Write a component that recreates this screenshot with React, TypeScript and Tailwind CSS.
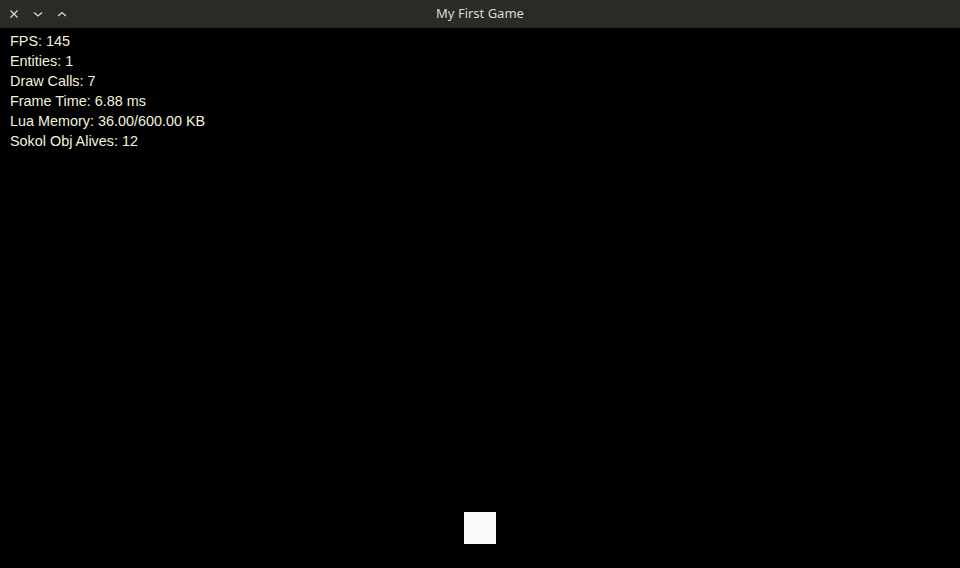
import React from "react";

export default function App() {
  const lines = [
    "FPS: 145",
    "Entities: 1",
    "Draw Calls: 7",
    "Frame Time: 6.88 ms",
    "Lua Memory: 36.00/600.00 KB",
    "Sokol Obj Alives: 12",
  ];
  return (
    <div className="w-[960px] h-[568px] flex flex-col bg-black overflow-hidden">
      <div className="h-[28px] bg-[#2a2a26] flex items-center relative shrink-0">
        <div className="flex items-center gap-[12px] pl-[8px]">
          <svg width="12" height="12" viewBox="0 0 12 12" fill="none" stroke="#d8d8d0" strokeWidth="1.3">
            <path d="M2.5 2.5 L9.5 9.5 M9.5 2.5 L2.5 9.5" />
          </svg>
          <svg width="12" height="12" viewBox="0 0 12 12" fill="none" stroke="#d8d8d0" strokeWidth="1.3">
            <path d="M2 4.5 L6 8 L10 4.5" />
          </svg>
          <svg width="12" height="12" viewBox="0 0 12 12" fill="none" stroke="#d8d8d0" strokeWidth="1.3">
            <path d="M2 8 L6 4.5 L10 8" />
          </svg>
        </div>
        <div className="absolute inset-0 flex items-center justify-center text-[13px] text-[#d8d8d4] font-['Noto_Sans',sans-serif] pointer-events-none">
          My First Game
        </div>
      </div>
      <div className="flex-1 flex flex-col relative">
        <div className="flex flex-col pl-[10px] pt-[3px] font-['Liberation_Sans',sans-serif] text-[14.4px] leading-[20px] text-[#f2f2dc]">
          {lines.map((l) => (
            <div key={l}>{l}</div>
          ))}
        </div>
        <div className="flex-1" />
        <div className="flex justify-center pb-[24px]">
          <div className="w-[32px] h-[32px] bg-[#fafaf8]" />
        </div>
      </div>
    </div>
  );
}
